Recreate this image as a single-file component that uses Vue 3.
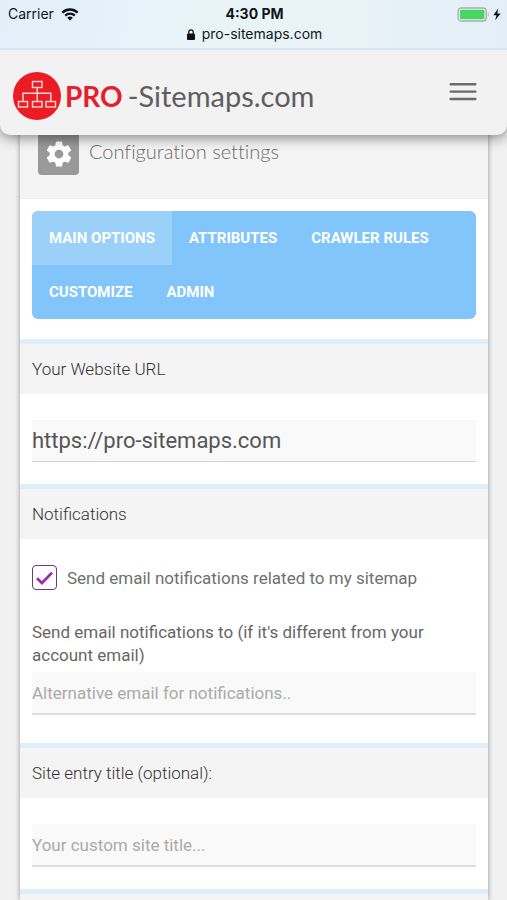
<script setup>
import { ref } from 'vue'

const tabs = ['Main options', 'Attributes', 'Crawler rules', 'Customize', 'Admin']
const activeTab = ref('Main options')
const url = ref('https://pro-sitemaps.com')
const notify = ref(true)
const email = ref('')
const title = ref('')
</script>

<template>
  <div class="page">
    <div class="status">
      <div class="status-row">
        <div class="carrier">
          <span>Carrier</span>
          <svg width="18" height="13" viewBox="0 0 18 13" aria-hidden="true">
            <path d="M1.4 4.6a10.8 10.8 0 0 1 15.2 0" fill="none" stroke="#0b1116" stroke-width="2.4" />
            <path d="M4.2 7.6a6.9 6.9 0 0 1 9.6 0" fill="none" stroke="#0b1116" stroke-width="2.2" />
            <path d="M9 12.8 6.2 9.8a4 4 0 0 1 5.6 0z" fill="#0b1116" />
          </svg>
        </div>
        <span class="time">4:30 PM</span>
        <div class="battery">
          <svg width="44" height="15" viewBox="0 0 44 15" aria-hidden="true">
            <rect x="1.2" y="1" width="28" height="13" rx="3" fill="#e9f5ee" stroke="#a3adb3" stroke-width="1.3" />
            <rect x="3" y="2.8" width="24.4" height="9.4" rx="1" fill="#47d861" />
            <path d="M30.8 5.2q2 2.3 0 4.6z" fill="#a3adb3" />
            <path d="M41.2 1.6 36.4 8.2h3L38.2 13.2l5.4-6.8h-3.3z" fill="#0b1116" />
          </svg>
        </div>
      </div>
      <div class="address">
        <svg width="8" height="11" viewBox="0 0 8 11" aria-hidden="true">
          <rect y="4.6" width="8" height="6.4" rx="1" fill="#111" />
          <path d="M1.8 5V3.2a2.2 2.4 0 0 1 4.4 0V5" fill="none" stroke="#111" stroke-width="1.2" />
        </svg>
        <span>pro-sitemaps.com</span>
      </div>
    </div>

    <header class="topbar">
      <a class="brand" href="#">
        <svg width="48" height="48" viewBox="0 0 48 48" aria-hidden="true">
          <circle cx="24" cy="24" r="24" fill="#ec1c24" />
          <g fill="none" stroke="#ffd9d6" stroke-width="1.4">
            <rect x="19.5" y="9.5" width="9.5" height="6" />
            <rect x="5.5" y="29.5" width="9" height="5.5" />
            <rect x="19.5" y="29.5" width="9.5" height="5.5" />
            <rect x="33" y="29.5" width="9.5" height="5.5" />
            <path d="M24.2 15.5v14M10 29.5v-8.3h27.8v8.3" />
          </g>
        </svg>
        <span class="pro">PRO</span>
        <span class="name">-Sitemaps.com</span>
      </a>
      <button class="menu" type="button" aria-label="Menu">
        <svg width="28" height="20" viewBox="0 0 28 20" aria-hidden="true">
          <path d="M1.7 2.2h24.6M1.7 9.6h24.6M1.7 17h24.6" fill="none" stroke="#6a6a6a" stroke-width="2.4" stroke-linecap="round" />
        </svg>
      </button>
    </header>

    <main class="card">
      <div class="card-head">
        <span class="gear">
          <svg width="30" height="30" viewBox="0 0 24 24" aria-hidden="true">
            <path fill="#fff" d="M19.43 12.98c.04-.32.07-.64.07-.98s-.03-.66-.07-.98l2.11-1.65c.19-.15.24-.42.12-.64l-2-3.46c-.12-.22-.39-.3-.61-.22l-2.49 1c-.52-.4-1.08-.73-1.69-.98l-.38-2.65C14.46 2.18 14.25 2 14 2h-4c-.25 0-.46.18-.49.42l-.38 2.65c-.61.25-1.17.59-1.69.98l-2.49-1c-.23-.09-.49 0-.61.22l-2 3.46c-.13.22-.07.49.12.64l2.11 1.65c-.04.32-.07.65-.07.98s.03.66.07.98l-2.11 1.65c-.19.15-.24.42-.12.64l2 3.46c.12.22.39.3.61.22l2.49-1c.52.4 1.08.73 1.69.98l.38 2.65c.03.24.24.42.49.42h4c.25 0 .46-.18.49-.42l.38-2.65c.61-.25 1.17-.59 1.69-.98l2.49 1c.23.09.49 0 .61-.22l2-3.46c.12-.22.07-.49-.12-.64l-2.11-1.65zM12 15.5c-1.93 0-3.5-1.57-3.5-3.5s1.57-3.5 3.5-3.5 3.5 1.57 3.5 3.5-1.57 3.5-3.5 3.5z" />
          </svg>
        </span>
        <h1>Configuration settings</h1>
      </div>

      <nav class="tabs">
        <button
          v-for="tab in tabs"
          :key="tab"
          type="button"
          :class="{ active: tab === activeTab }"
          @click="activeTab = tab"
        >{{ tab }}</button>
      </nav>

      <section>
        <h2><label for="url">Your Website URL</label></h2>
        <div class="body">
          <input id="url" v-model="url" class="field large" type="text">
        </div>
      </section>

      <section>
        <h2>Notifications</h2>
        <div class="body notifications">
          <label class="check">
            <input v-model="notify" type="checkbox">
            <span class="box">
              <svg v-if="notify" width="19" height="16" viewBox="0 0 19 16" aria-hidden="true">
                <path d="M2 8.2 7 13 17 2.6" fill="none" stroke="#9c27b0" stroke-width="2.7" />
              </svg>
            </span>
            <span>Send email notifications related to my sitemap</span>
          </label>
          <label class="hint" for="email">Send email notifications to (if it's different from your account email)</label>
          <input id="email" v-model="email" class="field" type="email" placeholder="Alternative email for notifications..">
        </div>
      </section>

      <section>
        <h2><label for="title">Site entry title (optional):</label></h2>
        <div class="body">
          <input id="title" v-model="title" class="field" type="text" placeholder="Your custom site title...">
        </div>
      </section>

      <div class="next"></div>
    </main>
  </div>
</template>

<style>
body {
  margin: 0;
  background: #f1f1f1;
}
</style>

<style scoped>
* {
  box-sizing: border-box;
}
.page {
  display: flex;
  flex-direction: column;
  min-height: 100vh;
  font-family: Roboto, sans-serif;
  color: #555;
}
.status {
  position: relative;
  z-index: 2;
  height: 50px;
  padding: 4px 6px 0 8px;
  background: linear-gradient(100deg, #e2effa 0%, #e8f3f9 35%, #eaf4f7 55%, #e3eef8 100%);
  border-bottom: 2px solid #dde4e9;
  color: #10161b;
  font-family: Inter, sans-serif;
  font-size: 14px;
  line-height: 20px;
}
.status-row {
  display: grid;
  grid-template-columns: 1fr auto 1fr;
  align-items: center;
}
.carrier {
  display: flex;
  align-items: center;
  gap: 7px;
}
.time {
  font-weight: 700;
}
.battery {
  display: flex;
  justify-content: flex-end;
}
.address {
  display: flex;
  align-items: center;
  justify-content: center;
  gap: 7px;
}
.topbar {
  position: relative;
  z-index: 1;
  display: flex;
  align-items: center;
  justify-content: space-between;
  height: 85px;
  padding: 6px 30px 0 13px;
  background: #f2f2f2;
  border-radius: 0 0 10px 10px;
  box-shadow: 0 2px 14px rgba(0, 0, 0, 0.5);
}
.brand {
  display: flex;
  align-items: center;
  font-family: Lato, sans-serif;
  font-size: 29px;
  line-height: 36px;
  text-decoration: none;
}
.pro {
  margin-left: 4px;
  color: #e5202a;
  font-size: 28px;
  font-weight: 700;
}
.name {
  margin-left: 5px;
  color: #5e5e5e;
}
.menu {
  display: flex;
  padding: 0;
  margin-bottom: 8px;
  border: 0;
  background: none;
}
.card {
  display: flex;
  flex: 1;
  flex-direction: column;
  margin: -12px 19px 0 20px;
  background: #fff;
  box-shadow: 0 0 5px rgba(0, 0, 0, 0.4);
}
.card-head {
  display: flex;
  align-items: flex-start;
  gap: 10px;
  height: 76px;
  padding: 10px 18px;
  background: #f4f4f4;
  border-bottom: 1px solid #eee;
}
.gear {
  display: flex;
  align-items: center;
  justify-content: center;
  width: 41px;
  height: 42px;
  border-radius: 4px;
  background: #999;
}
h1 {
  margin: 5px 0 0;
  color: #6c6c6c;
  font: 300 20px/26px Lato, sans-serif;
  font-variant-ligatures: none;
}
.tabs {
  display: flex;
  flex-wrap: wrap;
  margin: 12px 12px 20px;
  overflow: hidden;
  border-radius: 6px;
  background: #82c5fa;
}
.tabs button {
  height: 54px;
  padding: 0 17px;
  border: 0;
  background: none;
  color: #fff;
  font: 700 15px/20px Roboto, sans-serif;
  text-transform: uppercase;
}
.tabs .active {
  background: #9bd1f9;
}
h2 {
  height: 55px;
  margin: 0;
  padding: 13px 12px;
  border-top: 5px solid #deeefa;
  background: #f4f4f4;
  font-size: 17px;
  font-weight: 300;
  line-height: 24px;
  color: #333;
}
.body {
  display: flex;
  flex-direction: column;
  padding: 26px 12px 22px;
}
.notifications {
  padding-bottom: 28px;
}
.field {
  width: 100%;
  height: 43px;
  padding: 0;
  border: 0;
  border-bottom: 2px solid #dedede;
  border-radius: 0;
  outline: 0;
  background: #f9f9f9;
  color: #555;
  font: 400 17px/24px Roboto, sans-serif;
}
.field::placeholder {
  color: #aaa;
  opacity: 1;
}
.large {
  height: 42px;
  border-bottom: 1px solid #d0d0d0;
  font-size: 22px;
}
.check {
  position: relative;
  display: flex;
  align-items: center;
  gap: 10px;
  font-size: 17px;
  line-height: 24px;
  color: #707070;
}
.check input {
  position: absolute;
  width: 25px;
  height: 25px;
  margin: 0;
  opacity: 0;
}
.box {
  display: flex;
  align-items: center;
  justify-content: center;
  width: 25px;
  height: 25px;
  border: 1px solid #6b3a79;
  border-radius: 4px;
}
.hint {
  margin: 31px 0 5px;
  font-size: 17px;
  line-height: 23px;
  color: #666;
}
.next {
  flex: 1;
  border-top: 5px solid #deeefa;
  background: #f4f4f4;
}
</style>
